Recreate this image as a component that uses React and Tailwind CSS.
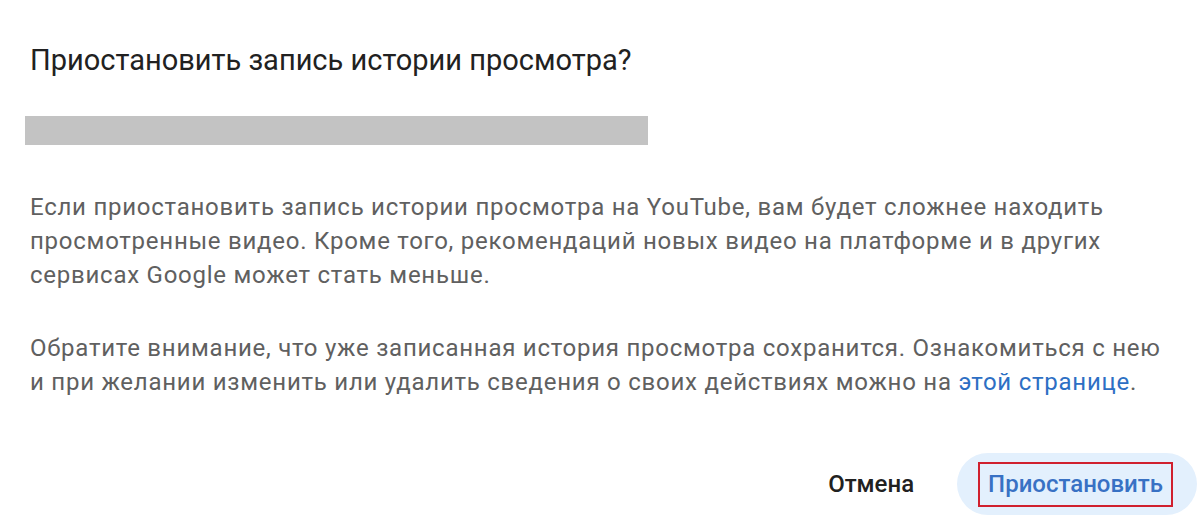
export default function App() {
  return (
    <div className="w-[1200px] h-[522px] bg-white overflow-hidden font-['Roboto',sans-serif]">
      <div className="pl-[30px] pr-[20px] pt-[40px]">
        <h1 className="text-[29px] leading-[40px] text-[#212121] font-normal">
          Приостановить запись истории просмотра?
        </h1>
        <div className="mt-[36px] -ml-[5px] w-[623px] h-[29px] bg-[#c3c3c3]" />
        <div className="mt-[45px] text-[24px] leading-[34px] tracking-[0.75px] text-[#606060] whitespace-nowrap">
          <p>
            Если приостановить запись истории просмотра на YouTube, вам будет сложнее находить
            <br />
            просмотренные видео. Кроме того, рекомендаций новых видео на платформе и в других
            <br />
            сервисах Google может стать меньше.
          </p>
          <p className="mt-[39px]">
            Обратите внимание, что уже записанная история просмотра сохранится. Ознакомиться с нею
            <br />
            и при желании изменить или удалить сведения о своих действиях можно на{' '}
            <a className="text-[#2d6fc4]">этой странице</a>.
          </p>
        </div>
      </div>
      <div className="mt-[54px] flex items-center justify-end gap-[43px] pr-[3px]">
        <button className="text-[24px] text-[#212121] font-medium">Отмена</button>
        <button className="h-[62px] pl-[21px] pr-[24px] rounded-full bg-[#e3f0fd] flex items-center">
          <span className="border-2 border-[#d0202e] px-[8px] h-[45px] flex items-center text-[24px] font-medium text-[#3871c4]">
            Приостановить
          </span>
        </button>
      </div>
    </div>
  );
}
